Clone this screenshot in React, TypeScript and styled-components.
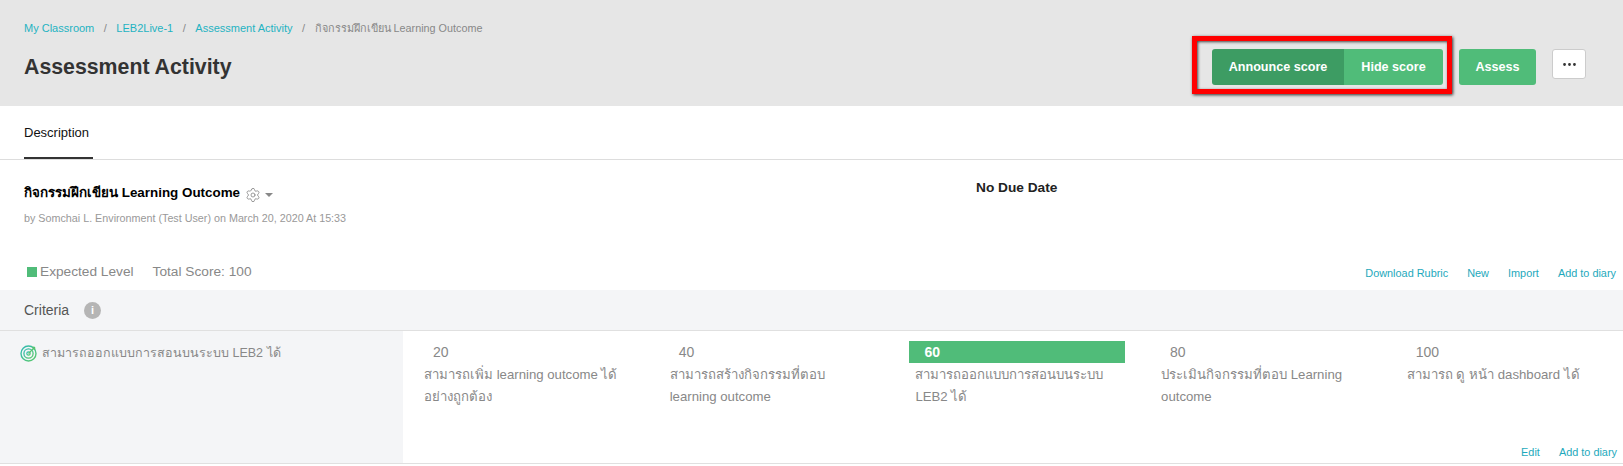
import React from 'react';
import styled, { createGlobalStyle } from 'styled-components';
import { Settings, Ellipsis } from 'lucide-react';

const GlobalStyle = createGlobalStyle`
  html, body {
    margin: 0;
    padding: 0;
    background: #fff;
    font-family: 'Liberation Sans', 'Noto Sans', 'Noto Sans CJK SC', sans-serif;
    overflow: hidden;
  }
`;

const Page = styled.div`
  width: 1623px;
  height: 466px;
`;

const Header = styled.header`
  height: 106px;
  box-sizing: border-box;
  padding: 0 37px 0 24px;
  background: #e6e6e6;
  display: flex;
  justify-content: space-between;
`;

const Crumbs = styled.nav`
  display: flex;
  gap: 9.5px;
  padding-top: 20px;
  font-size: 11px;
  line-height: 16px;
  color: #888;
`;

const CrumbLink = styled.a`
  color: #1fb3c2;
`;

const CrumbCurrent = styled.span`
  font-size: 10.8px;
`;

const Title = styled.h1`
  margin: 17px 0 0;
  font-size: 21.3px;
  line-height: 28px;
  font-weight: 700;
  color: #333;
`;

const Actions = styled.div`
  display: flex;
  align-items: flex-start;
  gap: 16px;
  padding-top: 49px;
`;

const ScoreGroup = styled.div`
  position: relative;
  display: flex;

  /* red annotation drawn over the screenshot */
  &::after {
    content: '';
    position: absolute;
    inset: -13px -9px -9px -20px;
    border: 5px solid #ff0000;
    box-shadow: 1px 1px 3px rgba(0, 0, 0, 0.8), inset 1px 1px 3px rgba(0, 0, 0, 0.7);
    pointer-events: none;
  }
`;

const GreenButton = styled.button<{ $dark?: boolean; $width: number; $edge?: 'left' | 'right' }>`
  width: ${({ $width }) => $width}px;
  height: 36px;
  padding: 0;
  border: none;
  border-radius: ${({ $edge }) =>
    $edge === 'left' ? '3px 0 0 3px' : $edge === 'right' ? '0 3px 3px 0' : '3px'};
  background: ${({ $dark }) => ($dark ? '#3d9c63' : '#50bc79')};
  color: #fff;
  font-family: inherit;
  font-size: 12.6px;
  font-weight: 700;
`;

const MoreButton = styled.button`
  width: 34px;
  height: 30px;
  padding: 0;
  display: flex;
  align-items: center;
  justify-content: center;
  background: #fff;
  border: 1px solid #ccc;
  border-radius: 3px;
  color: #333;
`;

const Tabs = styled.div`
  height: 54px;
  box-sizing: border-box;
  padding-left: 24px;
  border-bottom: 1px solid #ddd;
`;

const Tab = styled.div`
  width: 69px;
  height: 53px;
  box-sizing: border-box;
  padding-top: 18px;
  border-bottom: 2px solid #333;
  font-size: 13px;
  line-height: 18px;
  color: #111;
`;

const Activity = styled.section`
  height: 95px;
  box-sizing: border-box;
  padding: 23px 0 0 24px;
  display: grid;
  grid-template-columns: 952px 1fr;
`;

const ActivityTitle = styled.div`
  display: flex;
  align-items: center;
  font-size: 13.4px;
  line-height: 20px;
  font-weight: 700;
  color: #000;
`;

const GearIcon = styled(Settings)`
  margin: 3px 0 0 5px;
  color: #888;
`;

const Caret = styled.span`
  margin: 4px 0 0 4px;
  border-style: solid;
  border-width: 4px 4px 0;
  border-color: #888 transparent transparent;
`;

const Byline = styled.div`
  margin-top: 7px;
  font-size: 10.76px;
  line-height: 16px;
  color: #999;
`;

const DueDate = styled.div`
  margin-top: -5px;
  font-size: 13.7px;
  line-height: 20px;
  font-weight: 700;
  color: #222;
`;

const ScoreBar = styled.div`
  height: 35px;
  padding: 0 7px 0 27px;
  display: flex;
  align-items: center;
  justify-content: space-between;
`;

const ScoreInfo = styled.div`
  display: flex;
  align-items: center;
  margin-top: -2px;
  font-size: 13.7px;
  color: #888;
`;

const LevelSwatch = styled.span`
  width: 10px;
  height: 10px;
  margin-right: 3px;
  background: #50bc79;
`;

const TotalScore = styled.span`
  margin-left: 19px;
`;

const LinkRow = styled.div`
  display: flex;
  justify-content: flex-end;
  gap: 19px;
  font-size: 10.9px;
  line-height: 16px;
`;

const TextLink = styled.a`
  color: #1ea9bc;
`;

const CriteriaHead = styled.div`
  height: 41px;
  box-sizing: border-box;
  padding-left: 24px;
  display: flex;
  align-items: center;
  gap: 15px;
  background: #f4f5f7;
  border-bottom: 1px solid #e0e0e0;
  font-size: 14px;
  color: #555;
`;

const InfoBadge = styled.span`
  width: 17px;
  height: 17px;
  border-radius: 50%;
  background: #b5b5b5;
  color: #fff;
  font-size: 11px;
  font-weight: 700;
  line-height: 17px;
  text-align: center;
`;

const CriteriaRow = styled.div`
  height: 133px;
  box-sizing: border-box;
  display: flex;
  border-bottom: 1px solid #e0e0e0;
`;

const CriteriaName = styled.div`
  width: 403px;
  box-sizing: border-box;
  padding: 13px 0 0 20px;
  display: flex;
  align-items: flex-start;
  gap: 4px;
  background: #f4f5f7;
  font-size: 12.5px;
  line-height: 18px;
  color: #888;
`;

const LevelsPane = styled.div`
  flex: 1;
  padding: 10px 6px 3px 15px;
  display: flex;
  flex-direction: column;
  justify-content: space-between;
`;

const Levels = styled.div`
  display: grid;
  grid-template-columns: repeat(5, 215.7px);
  column-gap: 30px;
`;

const LevelScore = styled.div<{ $active?: boolean }>`
  height: 22px;
  padding-left: 15px;
  font-size: 14px;
  line-height: 22px;
  font-weight: ${({ $active }) => ($active ? 700 : 400)};
  background: ${({ $active }) => ($active ? '#50bc79' : 'transparent')};
  color: ${({ $active }) => ($active ? '#fff' : '#888')};
`;

const LevelText = styled.div`
  margin-top: 1px;
  padding: 0 12px 0 6px;
  font-size: 13.2px;
  line-height: 22px;
  color: #888;
`;

const TargetIcon = () => (
  <svg width="18" height="18" viewBox="0 0 18 18" fill="none" style={{ flexShrink: 0 }}>
    <defs>
      <linearGradient id="target" x1="0" y1="0" x2="1" y2="1">
        <stop offset="0" stopColor="#2fb9b4" />
        <stop offset="1" stopColor="#5cc96a" />
      </linearGradient>
    </defs>
    <circle cx="8.5" cy="9.5" r="7.5" stroke="url(#target)" strokeWidth="1.4" />
    <circle cx="8.5" cy="9.5" r="4.6" stroke="url(#target)" strokeWidth="1.3" />
    <circle cx="8.5" cy="9.5" r="1.7" stroke="url(#target)" strokeWidth="1.2" />
    <path d="M8.5 9.5 15 3M13.2 2.6v2.2h2.2" stroke="#55c46f" strokeWidth="1.2" />
  </svg>
);

const levels = [
  { score: 20, text: 'สามารถเพิ่ม learning outcome ได้ อย่างถูกต้อง' },
  { score: 40, text: 'สามารถสร้างกิจกรรมที่ตอบ learning outcome' },
  { score: 60, text: 'สามารถออกแบบการสอนบนระบบ LEB2 ได้', active: true },
  { score: 80, text: 'ประเมินกิจกรรมที่ตอบ Learning outcome' },
  { score: 100, text: 'สามารถ ดู หน้า dashboard ได้' },
];

const App: React.FC = () => (
  <Page>
    <GlobalStyle />
    <Header>
      <div>
        <Crumbs>
          <CrumbLink>My Classroom</CrumbLink>
          <span>/</span>
          <CrumbLink>LEB2Live-1</CrumbLink>
          <span>/</span>
          <CrumbLink>Assessment Activity</CrumbLink>
          <span>/</span>
          <CrumbCurrent>กิจกรรมฝึกเขียน Learning Outcome</CrumbCurrent>
        </Crumbs>
        <Title>Assessment Activity</Title>
      </div>
      <Actions>
        <ScoreGroup>
          <GreenButton $dark $width={132} $edge="left">Announce score</GreenButton>
          <GreenButton $width={99} $edge="right">Hide score</GreenButton>
        </ScoreGroup>
        <GreenButton $width={77}>Assess</GreenButton>
        <MoreButton aria-label="More">
          <Ellipsis size={17} strokeWidth={2} />
        </MoreButton>
      </Actions>
    </Header>

    <Tabs>
      <Tab>Description</Tab>
    </Tabs>

    <Activity>
      <div>
        <ActivityTitle>
          กิจกรรมฝึกเขียน Learning Outcome
          <GearIcon size={16} strokeWidth={1.25} />
          <Caret />
        </ActivityTitle>
        <Byline>by Somchai L. Environment (Test User) on March 20, 2020 At 15:33</Byline>
      </div>
      <DueDate>No Due Date</DueDate>
    </Activity>

    <ScoreBar>
      <ScoreInfo>
        <LevelSwatch />
        Expected Level
        <TotalScore>Total Score: 100</TotalScore>
      </ScoreInfo>
      <LinkRow>
        <TextLink>Download Rubric</TextLink>
        <TextLink>New</TextLink>
        <TextLink>Import</TextLink>
        <TextLink>Add to diary</TextLink>
      </LinkRow>
    </ScoreBar>

    <CriteriaHead>
      Criteria
      <InfoBadge>i</InfoBadge>
    </CriteriaHead>

    <CriteriaRow>
      <CriteriaName>
        <TargetIcon />
        สามารถออกแบบการสอนบนระบบ LEB2 ได้
      </CriteriaName>
      <LevelsPane>
        <Levels>
          {levels.map((level) => (
            <div key={level.score}>
              <LevelScore $active={level.active}>{level.score}</LevelScore>
              <LevelText>{level.text}</LevelText>
            </div>
          ))}
        </Levels>
        <LinkRow>
          <TextLink>Edit</TextLink>
          <TextLink>Add to diary</TextLink>
        </LinkRow>
      </LevelsPane>
    </CriteriaRow>
  </Page>
);

export default App;
